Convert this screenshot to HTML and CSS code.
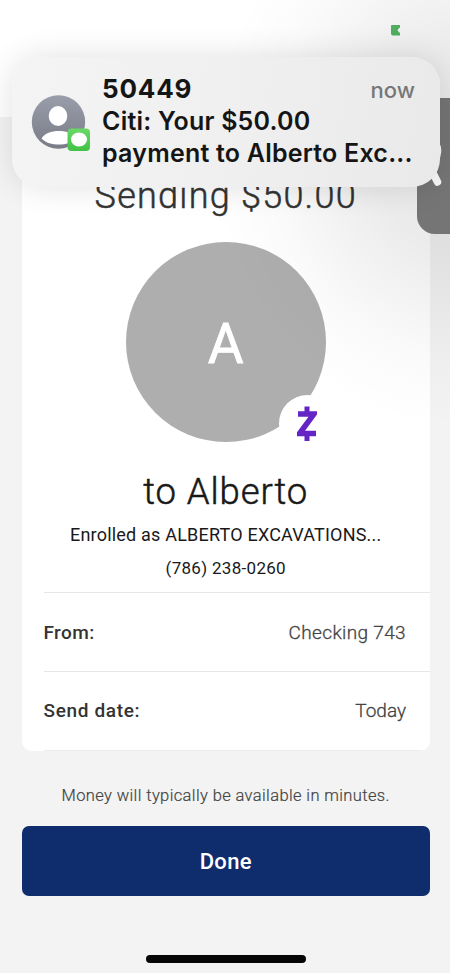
FILE: index.html
```html
<!DOCTYPE html>
<html lang="en">
<head>
<meta charset="utf-8">
<meta name="viewport" content="width=device-width, initial-scale=1">
<title>Payment sent</title>
<link rel="stylesheet" href="styles.css">
</head>
<body>
<div class="screen">
  <header class="topbar">
    <svg class="battery" width="11" height="11" viewBox="0 0 11 11"><path d="M1 0H9V2.500Q6.500 4 6.500 5.500L9 8V10.500H2Q0 10.500 0 8.500V1Q0 0 1 0Z" fill="#55b765"/></svg>
  </header>
  <main class="content">
    <section class="card">
      <h1 class="sending">Sending $50.00</h1>
      <div class="avatar">
        <span class="initial">A</span>
        <div class="zelle">
          <svg width="20" height="36" viewBox="0 0 20 36"><path d="M1 8H17L2.500 27.500H19" fill="none" stroke="#6425c4" stroke-width="5.500"/><path d="M10 0.500V9M10 26V35" stroke="#6425c4" stroke-width="5"/></svg>
        </div>
      </div>
      <h2 class="recipient">to Alberto</h2>
      <p class="enrolled">Enrolled as ALBERTO EXCAVATIONS...</p>
      <p class="phone">(786) 238-0260</p>
      <dl class="details">
        <div class="row"><dt class="from">From:</dt><dd class="account">Checking 743</dd></div>
        <div class="row"><dt class="send">Send date:</dt><dd class="today">Today</dd></div>
      </dl>
    </section>
    <p class="note">Money will typically be available in minutes.</p>
    <button class="done">Done</button>
    <div class="home"></div>
  </main>
  <div class="shade"></div>
  <div class="side-tab"></div>
  <svg class="tab-mark" width="18" height="46" viewBox="0 0 18 46"><path d="M9 0Q13 5 7 18M6 28L10.500 37" fill="none" stroke="#f8f8f8" stroke-width="7.500" stroke-linecap="round"/></svg>
  <aside class="banner">
    <div class="contact">
      <svg width="62" height="60" viewBox="0 0 62 60">
        <defs>
          <linearGradient id="grey" x2="0" y2="1"><stop stop-color="#9a9eaa"/><stop offset="1" stop-color="#797c87"/></linearGradient>
          <linearGradient id="green" x2="0" y2="1"><stop stop-color="#68d967"/><stop offset="1" stop-color="#42c146"/></linearGradient>
        </defs>
        <circle cx="27.500" cy="27" r="26.700" fill="url(#grey)"/>
        <ellipse cx="27" cy="21" rx="9.300" ry="10" fill="#fff"/>
        <path d="M10.500 43.500C14 38 20 36 28 36S42 38 45.500 43.500C40 48 35 49.500 28 49.500S15 48 10.500 43.500Z" fill="#fff"/>
        <rect x="36.500" y="33.500" width="22.500" height="22.500" rx="4" fill="url(#green)"/>
        <ellipse cx="48" cy="44.500" rx="8" ry="7" fill="#fff"/>
      </svg>
    </div>
    <div class="message">
      <div class="meta"><strong class="sender">50449</strong><span class="now">now</span></div>
      <div class="line one">Citi: Your $50.00</div>
      <div class="line two">payment to Alberto Exc...</div>
    </div>
  </aside>
</div>
</body>
</html>
```
FILE: styles.css
```css
* { box-sizing: border-box; }
body { margin: 0; background: #f3f3f3; font-family: Roboto, "Liberation Sans", sans-serif; color: #191919; }
h1, h2, p, dl, dd, dt { margin: 0; font-weight: 400; }
.screen { position: relative; width: 450px; height: 973px; overflow: hidden; background: #f3f3f3; }
.topbar { height: 117px; background: #fff; padding: 25px 0 0 391px; }
.battery { display: block; }
.content { padding: 0 20px 0 21.5px; }
.card { height: 634px; background: #fff; border-radius: 0 0 10px 10px; overflow: hidden; padding-top: 55px; text-align: center; display: flex; flex-direction: column; align-items: center; }
.card > *, .done, .note { flex: none; white-space: nowrap; }
.sending { height: 44px; font-size: 36px; line-height: 44px; font-weight: 300; letter-spacing: 1.25px; color: #333; margin-top: 2px; -webkit-text-stroke: .5px #333; }
.avatar { position: relative; width: 200px; height: 200px; margin-top: 24px; border-radius: 50%; background: #aeaeae; display: flex; align-items: center; justify-content: center; }
.initial { color: #fff; font-size: 55px; line-height: 60px; margin-top: 4px; -webkit-text-stroke: .8px #fff; }
.zelle { position: absolute; left: 153px; top: 153px; width: 57px; height: 57px; border-radius: 50%; background: #fff; display: flex; align-items: center; justify-content: center; }
.recipient { height: 44px; line-height: 44px; margin-top: 28px; font-size: 36.5px; font-weight: 300; letter-spacing: .9px; -webkit-text-stroke: .5px #191919; }
.enrolled { margin-top: 9px; height: 24px; line-height: 24px; font-size: 18px; letter-spacing: .2px; }
.phone { margin-top: 9px; height: 24px; line-height: 24px; font-size: 17px; letter-spacing: .3px; }
.details { align-self: stretch; margin: 12px 0 0 22px; }
.row { height: 79.3px; border-top: 1px solid #e6e6e6; display: flex; justify-content: space-between; align-items: center; padding-right: 24px; font-size: 19px; }
.row:last-child { border-bottom: 1px solid #ececec; }
dt { font-weight: 500; color: #333; letter-spacing: .4px; }
.send { letter-spacing: .65px; }
dd { color: #444; font-weight: 300; -webkit-text-stroke: .3px #444; }
.account { letter-spacing: .35px; }
.note { height: 24px; margin-top: 33px; line-height: 24px; text-align: center; font-size: 16.5px; letter-spacing: .38px; color: #444; font-weight: 300; -webkit-text-stroke: .2px #444; }
.done { display: block; width: 100%; height: 70px; margin-top: 18px; border: 0; border-radius: 7px; background: #0f2c6d; color: #fff; font: 500 22px/70px Roboto, sans-serif; letter-spacing: .3px; }
.home { width: 160px; height: 8px; margin: 59px auto 0; border-radius: 4px; background: #050505; }
.shade { position: absolute; inset: 0; height: 480px; background: radial-gradient(ellipse 250px 280px at 460px 150px, rgba(0,0,0,.10), rgba(0,0,0,.08) 35%, rgba(0,0,0,.02) 75%, transparent); }
.side-tab { position: absolute; left: 417px; top: 98px; width: 50px; height: 136px; border-radius: 18px; background: #757575; }
.tab-mark { position: absolute; left: 427px; top: 145px; }
.banner { position: absolute; left: 12px; top: 57px; width: 428px; height: 130px; border-radius: 28px; background: linear-gradient(100deg, #f4f4f4, #efefef 55%, #e9e9e9); box-shadow: 0 0 32px rgba(0,0,0,.12); display: flex; padding: 16px 25px 0 19px; font-family: Inter, sans-serif; color: #151515; }
.contact { width: 71px; padding-top: 22px; flex: none; }
.message { flex: 1; white-space: nowrap; }
.meta { display: flex; justify-content: space-between; height: 32px; line-height: 31px; }
.sender { font-size: 26px; font-weight: 700; letter-spacing: .8px; }
.now { font-size: 22px; font-weight: 500; color: #777; line-height: 34px; }
.line { height: 31.5px; line-height: 32px; font-size: 25px; font-weight: 600; letter-spacing: .22px; }
```
